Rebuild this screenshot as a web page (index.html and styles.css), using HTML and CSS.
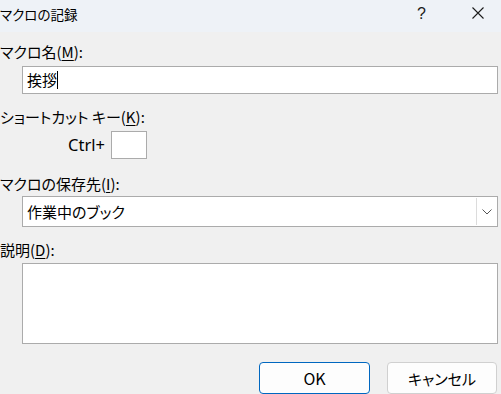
FILE: index.html
```
<!DOCTYPE html>
<html lang="ja">
<head>
<meta charset="utf-8">
<link rel="stylesheet" href="styles.css">
</head>
<body>
<div class="titlebar">
  <span class="title-text">マクロの記録</span>
  <span class="help">?</span>
  <span class="close"><svg width="12" height="12" viewBox="0 0 12 12"><path d="M0.5 0.5 L11.5 11.5 M11.5 0.5 L0.5 11.5" stroke="#1b1b1b" stroke-width="1.1" fill="none"/></svg></span>
</div>
<div class="content">
  <div class="label l1">マクロ名(<u>M</u>):</div>
  <div class="field name-field">挨拶<span class="caret"></span></div>
  <div class="label l2">ショートカット キー(<u>K</u>):</div>
  <div class="shortcut"><span class="ctrl">Ctrl+</span><span class="keybox"></span></div>
  <div class="label l3">マクロの保存先(<u>I</u>):</div>
  <div class="field combo"><span class="combo-text">作業中のブック</span><span class="drop"><svg width="10" height="6" viewBox="0 0 10 6"><path d="M0.5 0.5 L5 5 L9.5 0.5" stroke="#555" stroke-width="1" fill="none"/></svg></span></div>
  <div class="label l4">説明(<u>D</u>):</div>
  <div class="field desc"></div>
  <div class="buttons">
    <button class="btn ok">OK</button>
    <button class="btn cancel">キャンセル</button>
  </div>
</div>
</body>
</html>
```
FILE: styles.css
```
* { box-sizing: border-box; }
html, body { margin: 0; padding: 0; }
body {
  width: 501px;
  height: 394px;
  overflow: hidden;
  background: #f0f0f0;
  font-family: "Noto Sans CJK JP", "Noto Sans", sans-serif;
  font-size: 15px;
  color: #000;
  font-feature-settings: "palt";
}
.titlebar {
  height: 32px;
  background: #eef2f7;
  display: flex;
  align-items: center;
  position: relative;
}
.title-text {
  font-size: 13.5px;
  line-height: 20px;
  margin-top: -4px;
}
.help {
  position: absolute;
  left: 417px;
  top: 4px;
  font-family: "Liberation Sans", sans-serif;
  font-size: 16px;
  line-height: 20px;
  color: #1b1b1b;
}
.close {
  position: absolute;
  left: 472px;
  top: 7px;
  width: 12px;
  height: 12px;
  display: flex;
}
.content {
  display: flex;
  flex-direction: column;
  padding-top: 10px;
}
.label {
  line-height: 20px;
  height: 20px;
  white-space: nowrap;
}
.label u { text-underline-offset: 2px; }
.l2 { margin-top: 13px; }
.l3 { margin-top: 15px; }
.l4 { margin-top: 13px; }
.field {
  margin-left: 22px;
  width: 476px;
  background: #fff;
  border: 1px solid #ababab;
}
.name-field {
  margin-top: 4px;
  height: 28px;
  display: flex;
  align-items: center;
  padding-left: 4px;
  line-height: 20px;
}
.caret {
  display: inline-block;
  width: 1px;
  height: 18px;
  background: #000;
}
.shortcut {
  margin-top: 4px;
  display: flex;
  align-items: center;
  padding-left: 68px;
  gap: 6px;
  height: 28px;
}
.ctrl {
  font-family: "Noto Sans", sans-serif;
  font-size: 16.5px;
  line-height: 20px;
  width: 37px;
  white-space: nowrap;
}
.keybox {
  width: 36px;
  height: 28px;
  background: #fff;
  border: 1px solid #ababab;
}
.combo {
  margin-top: 2px;
  height: 31px;
  display: flex;
  align-items: stretch;
}
.combo-text {
  flex: 1;
  display: flex;
  align-items: center;
  padding-left: 4px;
}
.drop {
  width: 20px;
  margin: 1px;
  border-left: 1px solid #dcdcdc;
  display: flex;
  align-items: center;
  justify-content: center;
  background: #fff;
}
.desc {
  margin-top: 3px;
  height: 81px;
}
.buttons {
  margin-top: 18px;
  display: flex;
  justify-content: flex-end;
  gap: 17px;
  padding-right: 4px;
}
.btn {
  font-family: "Noto Sans CJK JP", "Noto Sans", sans-serif;
  font-feature-settings: "palt";
  font-size: 15px;
  height: 32px;
  background: #fdfdfd;
  border: 1px solid #d0d0d0;
  border-radius: 4px;
  color: #000;
  padding: 0;
}
.ok {
  width: 111px;
  border-color: #0067c0;
  font-size: 16px;
}
.cancel {
  width: 110px;
}
```
